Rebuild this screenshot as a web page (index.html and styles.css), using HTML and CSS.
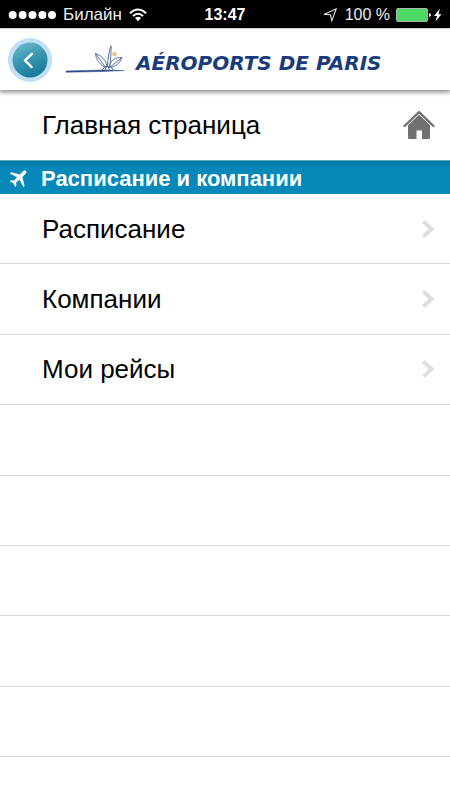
FILE: index.html
```
<!DOCTYPE html>
<html lang="ru">
<head>
<meta charset="utf-8">
<meta name="viewport" content="width=device-width, initial-scale=1">
<title>Aéroports de Paris</title>
<link rel="stylesheet" href="styles.css">
</head>
<body>
<div class="status">
  <div class="status-left">
    <svg width="48" height="10" viewBox="0 0 48 10" fill="#fff" aria-hidden="true"><circle cx="4.700" cy="5" r="4"/><circle cx="14.600" cy="5" r="4"/><circle cx="24.500" cy="5" r="4"/><circle cx="34.400" cy="5" r="4"/><circle cx="44" cy="5" r="4"/></svg>
    <span>Билайн</span>
    <svg class="wifi" width="18" height="14" viewBox="0 0 18 14" fill="none" stroke="#fff" stroke-width="2" aria-hidden="true"><path d="M1 5.2Q9-2.2 17 5.2M3.900 8Q9 3.400 14.100 8"/><path d="M6 10.100Q9 7.600 12 10.100L9 13.200z" fill="#fff" stroke="none"/></svg>
  </div>
  <time class="clock">13:47</time>
  <div class="status-right">
    <svg class="locate" width="14" height="14" viewBox="0 0 14 14" fill="none" stroke="#ddd" stroke-width="1.100" aria-hidden="true"><path d="M13.200 .8L8.800 12.800 7.400 6.800 1 6.400z"/></svg>
    <span>100 %</span>
    <svg width="46" height="16" viewBox="0 0 46 16" aria-hidden="true"><rect x=".5" y="1.500" width="31" height="13" rx="1.500" fill="#4cd964" stroke="#a5b5a8"/><path d="M33 6q2 .5 2 2t-2 2z" fill="#fff"/><path d="M44 1.500L38 9h3L39.500 14.500 45.500 7.300h-3z" fill="#fff"/></svg>
  </div>
</div>
<header class="header">
  <button class="back" type="button" aria-label="Назад">
    <svg width="44" height="44" viewBox="0 0 44 44" aria-hidden="true">
      <defs><linearGradient id="disc" x1=".2" y1="0" x2=".6" y2="1"><stop offset="0" stop-color="#6bb9cb"/><stop offset=".5" stop-color="#3795ae"/><stop offset="1" stop-color="#147a98"/></linearGradient></defs>
      <circle cx="22" cy="22" r="22" fill="#bfe0f5"/><circle cx="22" cy="22" r="17.500" fill="url(#disc)"/>
      <path d="M24 15.800L17 22.300 23.500 29" fill="none" stroke="#fff" stroke-width="2.500" stroke-linecap="round" stroke-linejoin="round"/>
    </svg>
  </button>
  <a class="brand" href="#">
    <svg width="58" height="30" viewBox="0 0 58 30" fill="none" stroke="#5870a0" stroke-width="1" aria-hidden="true">
      <circle cx="48.500" cy="9" r="2.300" fill="#f4bd82" stroke="none"/>
      <path d="M0 26L36 25 58 25.600 36 26.500 0 27.300z" fill="#294986" stroke="#294986" stroke-width=".5"/>
      <path d="M39 22.500C33 19 30 14 29.500 8.500 36 11 39.500 15 41 21M29.500 8.500L40 23M43.500 20.500C45 15 49 12.500 56 12.500 54 18 50 21.500 44.500 22.500M56 12.500L43 23M41.500 21C42 13 43 6 45 .8 45.200 8 44.500 15 44 21M36 25.500L39 21.500H45L47.500 25.500M39 25.500L40.500 21.500M42 21.500L43.500 25.500"/>
    </svg>
    <span class="brand-name">AÉROPORTS DE PARIS</span>
  </a>
</header>
<main class="content">
  <a class="row home" href="#"><span>Главная страница</span>
    <svg width="32" height="30" viewBox="0 0 32 30" aria-hidden="true"><path d="M1.500 16L16 2.200 30.500 16" fill="none" stroke="#717171" stroke-width="2.400" stroke-linecap="round" stroke-linejoin="round"/><path d="M16 4.800L27 15.300V28a1 1 0 0 1-1 1h-7V20.500h-5.500V29H6a1 1 0 0 1-1-1V15.300z" fill="#717171"/></svg>
  </a>
  <h2 class="section">
    <svg width="18" height="18" viewBox="0 0 18 18" fill="#fff" aria-hidden="true"><path d="M17 .8C16 .2 14.500 .8 13.500 1.800L10.800 4.400 2.200 2.300 1 3.500 8 7.300 5.200 10.600 2 10.300 .8 11.500 4.400 13.200 6.200 17 7.400 15.800 7.200 12.600 10.500 9.800 14.400 17 15.600 15.800 13.400 7 16.200 4.300C17.200 3.300 17.800 1.800 17 .8z"/></svg>
    <span>Расписание и компании</span>
  </h2>
  <nav class="list">
    <a class="row" href="#"><span>Расписание</span><svg class="chevron" width="14" height="20" viewBox="0 0 14 20" aria-hidden="true"><path d="M2.500 2.500L10.500 10 2.500 17.500"/></svg></a>
    <a class="row" href="#"><span>Компании</span><svg class="chevron" width="14" height="20" viewBox="0 0 14 20" aria-hidden="true"><path d="M2.500 2.500L10.500 10 2.500 17.500"/></svg></a>
    <a class="row" href="#"><span>Мои рейсы</span><svg class="chevron" width="14" height="20" viewBox="0 0 14 20" aria-hidden="true"><path d="M2.500 2.500L10.500 10 2.500 17.500"/></svg></a>
    <div class="row"></div>
    <div class="row"></div>
    <div class="row"></div>
    <div class="row"></div>
    <div class="row"></div>
  </nav>
</main>
</body>
</html>
```
FILE: styles.css
```
* { box-sizing: border-box; }
body {
  margin: 0;
  min-height: 100vh;
  display: flex;
  flex-direction: column;
  background: #fff;
  color: #000;
  font-family: "Liberation Sans", Arial, sans-serif;
}
a { color: inherit; text-decoration: none; }
svg { display: block; flex: none; }
.status {
  display: grid;
  grid-template-columns: 1fr auto 1fr;
  align-items: center;
  height: 28px;
  padding: 1px 8px 0;
  background: #000;
  color: #fff;
  font-size: 17px;
  line-height: 27px;
}
.status-left, .status-right { display: flex; align-items: center; gap: 6px; white-space: nowrap; }
.status-left { gap: 7px; color: #eee; }
.status-right { justify-content: flex-end; color: #eee; font-size: 16px; }
.locate { margin-right: 2px; }
.clock { font-weight: bold; font-size: 16px; }
.header {
  display: flex;
  align-items: center;
  gap: 14px;
  height: 62px;
  padding: 0 8px;
  background: #fff;
  border-top: 1px solid #ccc;
  box-shadow: 0 1px 5px 1px rgba(0, 0, 0, .5);
  z-index: 1;
}
.back { padding: 0; border: 0; background: none; border-radius: 50%; }
.brand { display: flex; align-items: center; gap: 12px; }
.brand-name {
  padding-top: 6px;
  color: #1b3b7c;
  font: italic bold 20px/28px "DejaVu Sans", sans-serif;
  white-space: nowrap;
}
.content { flex: 1; display: flex; flex-direction: column; }
.row {
  display: flex;
  align-items: center;
  justify-content: space-between;
  padding: 0 15px 0 42px;
  font-size: 26px;
  line-height: 32px;
}
.home { height: 70px; }
.section {
  display: flex;
  align-items: center;
  gap: 14px;
  height: 34px;
  margin: 0;
  padding: 3px 9px 0;
  background: linear-gradient(#087aa3, #0688b9 8px);
  border-top: 1px solid #5aa6c0;
  color: #fff;
  font-size: 22px;
  line-height: 30px;
}
.list {
  flex: 1;
  display: grid;
  grid-template-rows: repeat(8, minmax(50px, 1fr)) 43px;
}
.list .row { border-bottom: 1px solid #dcdcdc; }
.chevron { fill: none; stroke: #dedede; stroke-width: 4; }
```
